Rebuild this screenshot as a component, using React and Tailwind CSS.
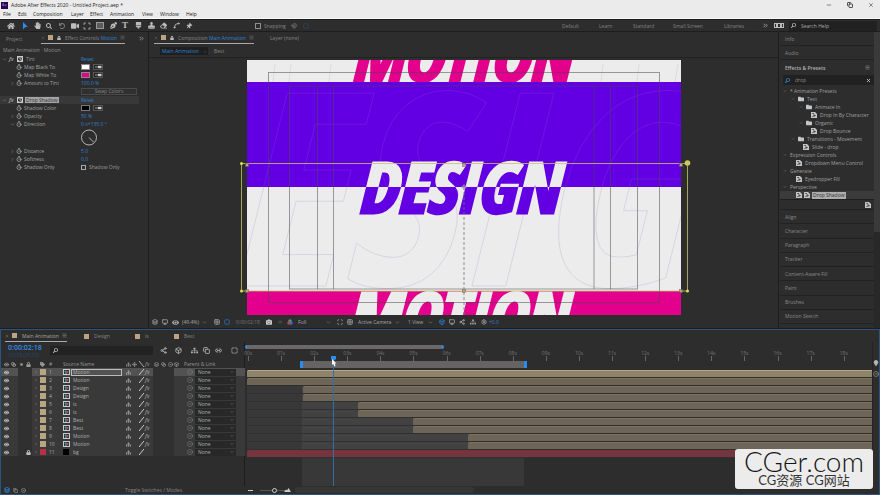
import React, { useState } from "react";
import {
  FaBrush,
  FaCamera,
  FaCube,
  FaEraser,
  FaEye,
  FaFolder,
  FaHandPaper,
  FaHome,
  FaLock,
  FaMapMarker,
  FaPenNib,
  FaSearch,
  FaSitemap,
  FaStamp,
  FaTag,
  FaThumbtack,
  FaUndo,
  FaVideo
} from "react-icons/fa";
import {
  Blend,
  Box,
  ChevronDown,
  ChevronRight,
  ChevronsRight,
  Circle,
  CircleDot,
  Copy,
  Grid2x2,
  Layers,
  Link2,
  Magnet,
  Menu,
  Minus,
  Monitor,
  Move,
  Scan,
  Settings,
  Share2,
  Spline,
  SquareDashed,
  Timer,
  X
} from "lucide-react";

const SECONDS = 18.85;

const menus = [
  ["File", "w-[15px]"],
  ["Edit", "w-[15px]"],
  ["Composition", "w-[38px]"],
  ["Layer", "w-[19px]"],
  ["Effect", "w-[20px]"],
  ["Animation", "w-[32px]"],
  ["View", "w-[18px]"],
  ["Window", "w-[26px]"],
  ["Help", "w-[14px]"]
];

const layers = [
  { name: "Motion", start: 0 },
  { name: "Motion", start: 0 },
  { name: "Design", start: 1.68 },
  { name: "Design", start: 1.68 },
  { name: "is", start: 3.34 },
  { name: "is", start: 3.34 },
  { name: "Best", start: 5 },
  { name: "Best", start: 5 },
  { name: "Motion", start: 6.66 },
  { name: "Motion", start: 6.66 },
  { name: "bg", start: 0, solid: true }
];

const presets = [
  { label: "* Animation Presets", pad: "pl-[3px]", open: true },
  { label: "Text", pad: "pl-[11px]", open: true, icon: "folder" },
  { label: "Animate In", pad: "pl-[19px]", open: true, icon: "folder" },
  { label: "Drop In By Character", pad: "pl-[31px]", icon: "preset" },
  { label: "Organic", pad: "pl-[19px]", open: true, icon: "folder" },
  { label: "Drop Bounce", pad: "pl-[31px]", icon: "preset" },
  { label: "Transitions - Movement", pad: "pl-[11px]", open: true, icon: "folder" },
  { label: "Slide - drop", pad: "pl-[23px]", icon: "preset" },
  { label: "Expression Controls", pad: "pl-[3px]", open: true },
  { label: "Dropdown Menu Control", pad: "pl-[16px]", icon: "preset" },
  { label: "Generate", pad: "pl-[3px]", open: true },
  { label: "Eyedropper Fill", pad: "pl-[16px]", icon: "preset" },
  { label: "Perspective", pad: "pl-[3px]", open: true }
];

const closedPanels = [
  "Align",
  "Character",
  "Paragraph",
  "Tracker",
  "Content-Aware Fill",
  "Paint",
  "Brushes",
  "Motion Sketch"
];

const percent = (seconds) => `${(seconds / SECONDS) * 100}%`;

function Cell({ w, children }) {
  return <span className={`flex shrink-0 items-center justify-center ${w}`}>{children}</span>;
}

function Tool({ label, w = "w-3", children }) {
  return (
    <button aria-label={label} className={`flex h-3 shrink-0 items-center justify-center ${w}`}>
      {children}
    </button>
  );
}

function PresetIcon() {
  return (
    <svg viewBox="0 0 6 6" className="size-[6px] shrink-0">
      <path d="M0 0H4L6 2V6H0Z" fill="#c4c4c4" />
      <path d="M1.3 1.5H3M1.3 4.5H2.2M3 2.2V5M3 3.6H4.8" stroke="#333" strokeWidth=".8" fill="none" />
    </svg>
  );
}

function CompIcon() {
  return (
    <svg viewBox="0 0 7 6" className="h-[6px] w-[7px]">
      <rect width="7" height="6" fill="#c9cbcb" />
      <rect x="1" y="1" width="5" height="4" fill="#26343b" />
      <circle cx="2.6" cy="2.5" r="1" fill="#50a779" />
      <rect x="3.4" y="2" width="2" height="2" fill="#c9474e" />
      <path d="M1.7 5L3 3L4.3 5Z" fill="#4b84c6" />
    </svg>
  );
}

function EyedropperIcon() {
  return (
    <svg viewBox="0 0 10 6" className="ml-[3px] h-[6px] w-[10px]">
      <rect x=".5" y=".5" width="9" height="5" fill="#252525" stroke="#686868" strokeWidth=".7" />
      <path d="M2 3H6" stroke="#bbb" strokeWidth=".8" />
      <path d="M5 1.8H8.5V4.2H5Z" fill="#d0d0d0" />
    </svg>
  );
}

function TitleBar() {
  return (
    <header className="h-[19px] border-b border-[#f8f8f8] bg-[#ebebeb] text-[#222]">
      <div className="flex h-[10px] items-center pl-px pr-1.5">
        <span className="mr-[3px] flex size-[7px] items-center justify-center bg-[#2a0650] text-[4px] text-[#b48bf0]">Ae</span>
        <span>Adobe After Effects 2020 - Untitled Project.aep *</span>
        <div className="ml-auto flex gap-[15px] text-[#222]">
          <button aria-label="Minimize"><Minus size={6} /></button>
          <button aria-label="Restore"><Copy size={6} strokeWidth={3} /></button>
          <button aria-label="Close"><X size={6} /></button>
        </div>
      </div>
      <nav className="flex h-2 items-center pl-[3px]">
        {menus.map(([label, w]) => (
          <button key={label} className={`text-left whitespace-nowrap ${w}`}>{label}</button>
        ))}
      </nav>
    </header>
  );
}

function Toolbar() {
  return (
    <div className="flex h-[13px] items-center border-t border-b border-[#1d1d1d] bg-[#2d2d2d] pl-1 text-[#bdbdbd]">
      <Tool label="Home" w="w-[14px]"><FaHome size={8} /></Tool>
      <Tool label="Selection" w="w-[13px]">
        <svg viewBox="0 0 8 8" className="size-2"><path d="M2 0L7 5H4.4L2 7.4Z" fill="#2d8ceb" /></svg>
      </Tool>
      <Tool label="Hand"><FaHandPaper size={7} /></Tool>
      <Tool label="Zoom"><FaSearch size={6} /></Tool>
      <Tool label="Rotate" w="w-[14px]"><FaUndo size={6} className="text-[#828282]" /></Tool>
      <Tool label="Camera"><FaVideo size={8} /></Tool>
      <Tool label="Pan behind"><Scan size={8} strokeWidth={3} /></Tool>
      <Tool label="Rectangle" w="w-[14px]">
        <svg viewBox="0 0 8 7" className="h-[7px] w-2"><rect x=".5" y=".5" width="7" height="6" fill="#5b5b5b" stroke="#999" /></svg>
      </Tool>
      <Tool label="Pen"><FaPenNib size={7} /></Tool>
      <Tool label="Type"><span className="font-['Liberation_Serif',serif] text-[9px] leading-[9px] font-bold">T</span></Tool>
      <Tool label="Brush" w="w-[14px]"><FaBrush size={7} /></Tool>
      <Tool label="Clone stamp"><FaStamp size={7} /></Tool>
      <Tool label="Eraser"><FaEraser size={7} /></Tool>
      <Tool label="Roto brush" w="w-[14px]"><Spline size={7} strokeWidth={3} /></Tool>
      <Tool label="Puppet pin"><FaThumbtack size={6} className="rotate-45" /></Tool>
      <label className="ml-[60px] flex items-center gap-[3px] text-[#858585]">
        <input type="checkbox" className="size-[6px] appearance-none border border-[#8f8f8f]" />
        Snapping
      </label>
      <Tool label="Snap to edges" w="ml-[2px] w-[12px]"><Magnet size={6} className="text-[#999]" /></Tool>
      <Tool label="Snap inside"><SquareDashed size={6} className="text-[#286092]" /></Tool>
      <div className="ml-auto flex items-center whitespace-nowrap text-[#828282]">
        <button className="w-[37px] text-left">Default</button>
        <button className="w-[34px] text-left">Learn</button>
        <button className="w-[40px] text-left">Standard</button>
        <button className="w-[51px] text-left">Small Screen</button>
        <button className="w-[37px] text-left">Libraries</button>
        <Tool label="More workspaces" w="w-[8px]"><ChevronsRight size={7} className="text-[#ccc]" /></Tool>
        <Tool label="Workspace grid" w="w-[20px]">
          <svg viewBox="0 0 10 5" className="h-[5px] w-[10px]"><path d="M0 0H10V5H0ZM1 1V4H2V1ZM4 1V4H6V1ZM8 1V4H9V1Z" fill="#bbb" fillRule="evenodd" /></svg>
        </Tool>
      </div>
      <label className="mr-[3px] flex h-[10px] w-[88px] items-center bg-[#212121] pl-0.5 text-[#b5b5b5]">
        <FaSearch size={5} className="mr-[5px] shrink-0 -scale-x-100" />
        <input aria-label="Search Help" placeholder="Search Help" className="w-full min-w-0 placeholder:text-[#a9a9a9]" />
      </label>
    </div>
  );
}

function PropertyRow({ label, arrow, children }) {
  return (
    <div className="flex h-2 items-center text-[#a3a3a3]">
      <span className="flex w-[16px] justify-end pr-px">
        {arrow === "right" && <ChevronRight size={5} />}
        {arrow === "down" && <ChevronDown size={5} />}
      </span>
      <Timer size={6} strokeWidth={3} className="mr-[2px]" />
      <span className="w-[57px] whitespace-nowrap">{label}</span>
      <span className="flex items-center whitespace-nowrap text-[#2f82d0]">{children}</span>
    </div>
  );
}

function EffectHeading({ label, selected }) {
  return (
    <div className={`flex h-2 items-center ${selected ? "mr-[9px] bg-[#383838]" : ""}`}>
      <span className="flex w-[9px] justify-center text-[#999]"><ChevronDown size={5} /></span>
      <i className="w-2 text-[6px] text-[#c8c8c8]">fx</i>
      <span className="mr-[2px] flex h-[6px] w-[6px] items-center justify-center bg-[#c8c8c8] text-[#333]"><FaCube size={4} /></span>
      <span className="w-[56px]">
        <span className={selected ? "bg-[#a3a3a3] px-px text-[#333]" : "px-px text-[#999]"}>{label}</span>
      </span>
      <button className="text-[#2f82d0]">Reset</button>
    </div>
  );
}

function EffectControls() {
  return (
    <section className="flex w-[148px] shrink-0 flex-col bg-[#2d2d2d]">
      <div className="flex h-[12px] items-center pl-[6px] text-[#858585]">
        <button className="w-[35px] pt-px text-left">Project</button>
        <div className="flex h-full w-[84px] items-center border-b border-[#aaa] whitespace-nowrap">
          <X size={4} className="mr-[3px]" />
          <span className="size-[5px] bg-[#b9a583]" />
          <FaLock size={4} className="mx-1 text-[#bbb]" />
          <button>Effect Controls <span className="text-[#2f82d0]">Motion</span></button>
          <Menu size={5} className="ml-[3px]" />
        </div>
        <ChevronsRight size={7} className="mr-[3px] ml-auto text-[#bbb]" />
      </div>
      <div className="h-[11px] pt-[2px] pl-[3px] text-[#8f8f8f]">Main Animation · Motion</div>
      <EffectHeading label="Tint" />
      <PropertyRow label="Map Black To">
        <button aria-label="Black colour" className="h-[6px] w-[9px] border border-[#888] bg-white" /><EyedropperIcon />
      </PropertyRow>
      <PropertyRow label="Map White To">
        <button aria-label="White colour" className="h-[6px] w-[9px] border border-[#888] bg-[#e3008c]" /><EyedropperIcon />
      </PropertyRow>
      <PropertyRow label="Amount to Tint" arrow="right">100.0 %</PropertyRow>
      <button className="mt-px ml-[81px] h-[7px] w-[56px] border border-[#191919] bg-[#303030] leading-[5px] text-[#858585] outline outline-[#494949] -outline-offset-1">Swap Colors</button>
      <div className="h-px" />
      <EffectHeading label="Drop Shadow" selected />
      <PropertyRow label="Shadow Color">
        <button aria-label="Shadow colour" className="h-[6px] w-[9px] border border-[#777] bg-black" /><EyedropperIcon />
      </PropertyRow>
      <PropertyRow label="Opacity" arrow="right">50 %</PropertyRow>
      <PropertyRow label="Direction" arrow="down">0 x+135.0 °</PropertyRow>
      <svg viewBox="0 0 18 19" className="ml-[80px] h-[19px] w-[18px]">
        <circle cx="9" cy="9.5" r="7.5" fill="none" stroke="#b4b4b4" />
        <path d="M9 9.5L13.5 14" stroke="#b4b4b4" />
      </svg>
      <PropertyRow label="Distance" arrow="right">5.0</PropertyRow>
      <PropertyRow label="Softness" arrow="right">0.0</PropertyRow>
      <PropertyRow label="Shadow Only">
        <label className="flex items-center gap-[3px] text-[#9b9b9b]">
          <input type="checkbox" className="size-[5px] appearance-none border border-[#aaa]" />
          Shadow Only
        </label>
      </PropertyRow>
    </section>
  );
}

function Artwork() {
  const heavy = "font-['Open_Sans_Condensed','Roboto_Condensed','Liberation_Sans_Narrow',sans-serif] font-bold italic";
  return (
    <svg viewBox="149 58 629 258" className="block w-full border-t border-[#222]">
      <defs>
        <clipPath id="top"><rect x="247" y="60" width="434" height="22" /></clipPath>
        <clipPath id="middle"><rect x="247" y="82" width="434" height="209" /></clipPath>
        <clipPath id="bottom"><rect x="247" y="291" width="434" height="24" /></clipPath>
        <linearGradient id="split" gradientUnits="userSpaceOnUse" x1="0" y1="82" x2="0" y2="292">
          <stop offset=".5" stopColor="#ececec" />
          <stop offset=".5" stopColor="#6200e3" />
        </linearGradient>
        <linearGradient id="outline" gradientUnits="userSpaceOnUse" x1="0" y1="82" x2="0" y2="292">
          <stop offset=".5" stopColor="#6d16e2" />
          <stop offset=".5" stopColor="#d6d5df" />
        </linearGradient>
      </defs>
      <rect x="247" y="60" width="434" height="255" fill="#ececec" />
      <rect x="247" y="82" width="434" height="105" fill="#6200e3" />
      <rect x="247" y="291" width="434" height="24" fill="#e3008c" />
      <path d="M275 64L273 82M291 64L289 82M331 64L329 82M603 64L601 82M639 64L637 82M678 64L675 82" stroke="#dcdcdf" />
      <g clipPath="url(#middle)">
        <text x="222" y="286" fontSize="270" className={heavy} fill="none" stroke="url(#outline)">ESIGN</text>
      </g>
      <g clipPath="url(#top)">
        <text x="460" y="81" fontSize="66" textAnchor="middle" className={heavy} fill="#e3008c" stroke="#e3008c" strokeWidth="3">MOTION</text>
      </g>
      <g clipPath="url(#bottom)">
        <text x="456" y="340" fontSize="66" textAnchor="middle" className={heavy} fill="#ececec" stroke="#ececec" strokeWidth="3">MOTION</text>
      </g>
      <text x="457" y="213" fontSize="70" textAnchor="middle" className={heavy} fill="url(#split)" stroke="url(#split)" strokeWidth="3">DESIGN</text>
      <g fill="none" stroke="#4a4a4a" strokeOpacity=".65" strokeWidth=".8">
        <rect x="268.5" y="72.5" width="391" height="230" />
        <rect x="289.5" y="86" width="348" height="203" />
        <path d="M317.5 86V289M333.5 86V289M594 86V289M610.5 86V289" />
      </g>
      <rect x="241.5" y="163.5" width="446" height="127.5" fill="none" stroke="#c5c466" strokeWidth=".8" />
      <path d="M464 187V315" stroke="#777" strokeWidth=".8" strokeDasharray="3 2" />
      <g fill="#b7a47c" stroke="#5e5545" strokeWidth=".4">
        <rect x="245.5" y="163.5" width="3" height="3" />
        <rect x="462.5" y="163.5" width="3" height="3" />
        <rect x="679.5" y="163.5" width="3" height="3" />
        <rect x="245.5" y="289.5" width="3" height="3" />
        <rect x="462.5" y="289.5" width="3" height="3" />
        <rect x="679.5" y="289.5" width="3" height="3" />
      </g>
      <g fill="#e0e04e">
        <circle cx="241.5" cy="163.5" r="1.5" />
        <circle cx="241.5" cy="291" r="1.5" />
        <circle cx="687.5" cy="291" r="1.5" />
        <circle cx="687.5" cy="163" r="2.8" fill="#c9c95c" />
      </g>
      <path d="M461 187H467M464 184V190" stroke="#a99" strokeWidth=".7" />
      <circle cx="464" cy="187" r="1.5" fill="none" stroke="#a99" strokeWidth=".7" />
    </svg>
  );
}

function Dropdown({ label, value, w }) {
  return (
    <span className={`flex shrink-0 items-center ${w}`}>
      <select aria-label={label} className="min-w-0 flex-1 appearance-none">
        <option>{value}</option>
      </select>
      <ChevronDown size={5} className="mr-1 shrink-0" />
    </span>
  );
}

function Viewer() {
  return (
    <section className="ml-px flex min-w-0 flex-1 flex-col bg-[#2d2d2d] text-[#858585]">
      <div className="flex h-[12px] items-center pl-[5px]">
        <div className="flex h-full w-[100px] items-center border-b border-[#aaa] whitespace-nowrap">
          <X size={4} className="mr-[3px]" />
          <span className="size-[5px] bg-[#b9a583]" />
          <FaLock size={4} className="mx-1 text-[#bbb]" />
          <button>Composition <span className="text-[#2f82d0]">Main Animation</span></button>
          <Menu size={5} className="ml-[3px]" />
        </div>
        <button className="ml-[16px]">Layer (none)</button>
      </div>
      <div className="flex h-[13px] items-center pl-[11px]">
        <button className="flex h-[8px] w-[48px] items-center justify-between bg-[#1f1f1f] px-0.5 whitespace-nowrap text-[#2f82d0]">
          Main Animation <span>‹</span>
        </button>
        <button className="ml-[6px]">Best</button>
      </div>
      <Artwork />
      <div className="flex h-[12px] items-center whitespace-nowrap text-[#a6a6a6]">
        <Cell w="w-[11px]"><Layers size={6} strokeWidth={3} /></Cell>
        <Cell w="w-[9px]"><Monitor size={6} strokeWidth={3} /></Cell>
        <Cell w="w-[13px]"><FaEye size={7} /></Cell>
        <Dropdown label="Magnification" value="(49.4%)" w="w-[29px]" />
        <Cell w="w-[11px]"><Grid2x2 size={6} strokeWidth={3} /></Cell>
        <Cell w="w-[10px]"><SquareDashed size={6} strokeWidth={3} className="text-[#2f82d0]" /></Cell>
        <span className="ml-[4px] w-[27px] text-[#777]">0:00:02:18</span>
        <Cell w="w-[12px]"><FaCamera size={6} className="text-[#ccc]" /></Cell>
        <Cell w="w-[9px]"><FaEye size={4} className="text-[#555]" /></Cell>
        <Cell w="w-[12px]">
          <svg viewBox="0 0 6 6" className="size-[6px]">
            <circle cx="3" cy="2" r="1.8" fill="#42a84a" />
            <circle cx="2" cy="4" r="1.8" fill="#cf3d43" />
            <circle cx="4" cy="4" r="1.8" fill="#4962d2" />
          </svg>
        </Cell>
        <Dropdown label="Resolution" value="Full" w="ml-[2px] w-[37px]" />
        <Cell w="w-[10px]"><Scan size={6} strokeWidth={3} /></Cell>
        <Cell w="w-[10px]"><Grid2x2 size={6} strokeWidth={3} /></Cell>
        <Dropdown label="Camera" value="Active Camera" w="ml-[3px] w-[46px]" />
        <Dropdown label="View layout" value="1 View" w="ml-[4px] w-[29px]" />
        <Cell w="w-[10px]"><Box size={6} strokeWidth={3} className="text-[#2f82d0]" /></Cell>
        <Cell w="w-[10px]"><Monitor size={6} strokeWidth={3} /></Cell>
        <Cell w="w-[10px]"><Share2 size={6} strokeWidth={3} /></Cell>
        <Cell w="w-[11px]"><FaSitemap size={6} /></Cell>
        <Cell w="w-[11px]"><Settings size={6} strokeWidth={3} /></Cell>
        <span className="text-[#2f82d0]">+0.0</span>
      </div>
    </section>
  );
}

function EffectsPanel() {
  const [query, setQuery] = useState("drop");
  return (
    <section className="ml-px flex w-[101px] shrink-0 bg-[#2d2d2d] text-[#8a8a8a]">
      <div className="flex min-w-0 flex-1 flex-col pl-px whitespace-nowrap">
        <button className="flex h-[14px] items-center border-b border-[#222] pl-[5px]">Info</button>
        <button className="flex h-[14px] items-center border-b border-[#222] pl-[5px]">Audio</button>
        <div className="flex h-[15px] items-center justify-between pr-1 pl-[5px] text-[#b2b2b2]">
          <h2 className="font-semibold">Effects & Presets</h2>
          <Menu size={5} />
        </div>
        <label className="ml-[3px] flex h-[10px] items-center bg-[#212121] pr-[3px] pl-0.5">
          <FaSearch size={5} className="mr-[5px] shrink-0 -scale-x-100 text-[#2f82d0]" />
          <input aria-label="Search effects" value={query} onChange={(e) => setQuery(e.target.value)} className="min-w-0 flex-1" />
          <button aria-label="Clear search" onClick={() => setQuery("")}><X size={5} strokeWidth={4} className="text-[#ccc]" /></button>
        </label>
        <ul className="pt-[2px] text-[#a0a0a0]">
          {presets.map((item) => (
            <li key={item.label} className={`flex h-2 items-center gap-[3px] ${item.pad}`}>
              {item.open && <ChevronDown size={4} className="shrink-0" />}
              {item.icon === "folder" && <FaFolder size={6} className="shrink-0 text-[#c4c4c4]" />}
              {item.icon === "preset" && <PresetIcon />}
              <span>{item.label}</span>
            </li>
          ))}
          <li className="flex h-2 items-center gap-[2px] bg-[#3b3b3b] pl-[16px]">
            <PresetIcon />
            <PresetIcon />
            <span className="bg-[#adadad] px-px leading-[7px] text-[#333]">Drop Shadow</span>
          </li>
        </ul>
        <div className="flex h-[10px] items-center justify-end border-t border-[#1f1f1f] pr-[3px]"><PresetIcon /></div>
        <div className="flex flex-1 flex-col border-b border-[#222]">
          {closedPanels.map((name) => (
            <button key={name} className="flex flex-1 items-center border-t border-[#222] pl-[5px]">{name}</button>
          ))}
        </div>
        <div className="h-[4px]" />
      </div>
      <div className="w-[6px] bg-[#282828]"><div className="h-[200px] bg-[#3a3a3a]" /></div>
    </section>
  );
}

function LayerRow({ layer, index }) {
  const selected = index === 0;
  return (
    <tr className={`h-2 ${selected ? "bg-[#525252]" : "bg-[#393939]"}`}>
      <td><FaEye size={5} className="mx-auto text-[#ccc]" /></td>
      <td />
      <td className="bg-[#303030]" />
      <td className="bg-[#303030]">{layer.solid && <FaLock size={5} className="mx-auto text-[#bbb]" />}</td>
      <td><ChevronRight size={4} className="mx-auto" /></td>
      <td><span className={`block size-[6px] ${layer.solid ? "bg-[#b92f48]" : "bg-[#b9a583]"}`} /></td>
      <td>{index + 1}</td>
      <td>{layer.solid ? <span className="block size-[6px] bg-black" /> : <CompIcon />}</td>
      <td>
        <span className={`block h-[7px] w-[51px] pl-[2px] ${selected ? "outline outline-[#bbb] -outline-offset-1" : ""}`}>{layer.name}</span>
      </td>
      <td><FaSitemap size={5} className="mx-auto" /></td>
      <td />
      <td>
        <svg viewBox="0 0 5 6" className="mx-auto h-[6px] w-[5px]"><path d="M0 6L5 0" stroke="#ccc" /></svg>
      </td>
      <td className="text-[6px] italic">{!layer.solid && "fx"}</td>
      <td className="bg-[#303030]" />
      <td className="bg-[#303030]" />
      <td className="bg-[#303030]" />
      <td />
      <td><CircleDot size={6} className="mx-auto text-[#858585]" /></td>
      <td>
        <span className="flex h-[7px] items-center bg-[#282828] pr-0.5 pl-[3px]">
          <select aria-label={`Parent of layer ${index + 1}`} className="h-[7px] min-w-0 flex-1 appearance-none leading-[7px]">
            <option>None</option>
          </select>
          <ChevronDown size={4} />
        </span>
      </td>
      <td />
    </tr>
  );
}

function LayerTable() {
  const widths = [10, 7, 7, 7, 8, 9, 14, 8, 54, 7, 6, 7, 8, 7, 7, 7, 10, 11, 41, 9];
  return (
    <table className="w-full table-fixed border-collapse text-[#adadad]">
      <colgroup>
        {widths.map((w, i) => <col key={i} style={{ width: w }} />)}
      </colgroup>
      <thead>
        <tr className="h-2 text-left text-[#969696] [&>th]:p-0 [&>th]:font-normal">
          <th aria-label="Visible"><FaEye size={5} className="mx-auto" /></th>
          <th aria-label="Audio"><Blend size={5} strokeWidth={4} /></th>
          <th aria-label="Solo"><Circle size={3} fill="currentColor" className="mx-auto" /></th>
          <th aria-label="Lock"><FaLock size={5} className="mx-auto" /></th>
          <th />
          <th aria-label="Label"><FaTag size={5} /></th>
          <th>#</th>
          <th colSpan={2} className="whitespace-nowrap">Source Name</th>
          <th aria-label="Shy"><FaSitemap size={5} className="mx-auto" /></th>
          <th aria-label="Collapse"><Move size={5} strokeWidth={3} /></th>
          <th aria-label="Quality">
            <svg viewBox="0 0 5 6" className="mx-auto h-[6px] w-[5px]"><path d="M0 0L5 6" stroke="#aaa" /></svg>
          </th>
          <th className="text-[6px] italic">fx</th>
          <th aria-label="Frame blending"><Layers size={5} strokeWidth={3} className="mx-auto" /></th>
          <th aria-label="Motion blur"><Blend size={5} strokeWidth={3} className="mx-auto" /></th>
          <th aria-label="Adjustment"><CircleDot size={5} strokeWidth={3} className="mx-auto" /></th>
          <th aria-label="3D"><Box size={5} strokeWidth={3} /></th>
          <th colSpan={3} className="whitespace-nowrap">Parent & Link</th>
        </tr>
      </thead>
      <tbody className="leading-[7px] [&_td]:p-0">
        {layers.map((layer, i) => <LayerRow key={i} layer={layer} index={i} />)}
      </tbody>
    </table>
  );
}

function Tracks() {
  const ticks = Array.from({ length: 19 }, (_, i) => `${String(i).padStart(2, "0")}s`);
  return (
    <div className="flex min-w-0 flex-1 flex-col">
      <div className="mt-[3px] h-[4px] w-[199px] rounded-sm border-x-2 border-[#2d8ceb] bg-[#6a6868]" />
      <div className="flex h-[12px] pl-[3px]">
        {ticks.map((label) => (
          <div key={label} className="shrink-0 text-[#777]" style={{ width: percent(1) }}>
            <span className="-ml-[4px] block h-[7px] leading-[8px]">{label}</span>
            <span className="block h-[5px] border-l border-[#666]" />
          </div>
        ))}
      </div>
      <div className="flex h-[9px] pl-[2px]">
        <div
          className="h-[7px] border-x-3 border-[#2d8ceb] bg-[#656363]"
          style={{ marginLeft: percent(1.6), width: percent(6.84) }}
        />
      </div>
      <div className="relative ml-[2px] flex-1">
        <div
          className="absolute inset-y-0 bg-[#383838]"
          style={{ left: percent(1.67), width: percent(6.68) }}
        />
        {layers.map((layer, i) => (
          <div key={i} className="relative h-2 border-b border-[#303030] bg-white/5">
            <div
              className={`h-[7px] rounded-tl-[2px] ${
                layer.solid
                  ? "bg-[#75353f]"
                  : i === 0
                    ? "border-t border-[#b3a88b] bg-[#8f8469]"
                    : "border-t border-[#7c725f] bg-[#6e6556]"
              }`}
              style={{ marginLeft: percent(layer.start) }}
            />
          </div>
        ))}
        <div className="absolute -top-[14px] bottom-0 w-px bg-[#2f6fa8]" style={{ left: percent(2.6) }}>
          <svg viewBox="0 0 8 12" className="-ml-[3px] h-3 w-2 max-w-none">
            <path d="M1 0H6V3L3.500 5L1 3Z" fill="#2d8ceb" />
            <path d="M2 3L6.500 7.500H4.700L5.500 10L4.300 10.400L3.400 8L2 9Z" fill="#fff" />
          </svg>
        </div>
      </div>
    </div>
  );
}

function CompTab({ label, w }) {
  return (
    <button className={`flex items-center gap-[5px] text-[#858585] ${w}`}>
      <span className="size-[5px] bg-[#b9a583]" />
      {label}
    </button>
  );
}

function Timeline() {
  return (
    <section className="mt-px flex h-[166px] flex-col border border-[#2b5480] bg-[#2d2d2d]">
      <div className="flex h-[12px] items-center pl-[4px]">
        <div className="mr-[17px] flex h-full w-[62px] items-center border-b border-[#aaa] whitespace-nowrap text-[#a5a5a5]">
          <X size={4} className="mr-[3px]" />
          <span className="mr-[5px] size-[5px] bg-[#b9a583]" />
          <button>Main Animation</button>
          <Menu size={5} className="ml-auto" />
        </div>
        <CompTab label="Design" w="w-[51px]" />
        <CompTab label="is" w="w-[39px]" />
        <CompTab label="Best" w="w-[30px]" />
      </div>
      <div className="flex min-h-0 flex-1">
        <div className="flex w-[244px] shrink-0 flex-col border-r border-[#1d1d1d]">
          <div className="flex h-[18px] items-start pl-[7px]">
            <div className="w-[42px] pt-px">
              <div className="text-[7px] leading-[9px] font-semibold text-[#2d8ceb]">0:00:02:18</div>
              <div className="leading-[7px] whitespace-nowrap text-[#24496e]">00078 (30.00)</div>
            </div>
            <label className="mt-[4px] mr-[5px] flex h-[9px] w-[103px] items-center bg-[#222] pl-[3px]">
              <FaSearch size={5} className="shrink-0 -scale-x-100 text-[#bbb]" />
              <input aria-label="Search layers" className="min-w-0 flex-1" />
            </label>
            <div className="mt-[5px] flex text-[#b0b0b0]">
              <Cell w="w-[11px]"><Share2 size={7} strokeWidth={3} /></Cell>
              <Cell w="w-[19px]"><Box size={7} strokeWidth={3} /></Cell>
              <Cell w="w-[13px]"><FaSitemap size={7} /></Cell>
              <Cell w="w-[11px]"><Copy size={7} strokeWidth={3} /></Cell>
              <Cell w="w-[13px]"><Link2 size={7} strokeWidth={3} /></Cell>
              <Cell w="w-[18px]"><SquareDashed size={7} strokeWidth={3} /></Cell>
            </div>
          </div>
          <LayerTable />
        </div>
        <Tracks />
        <div className="flex w-[7px] flex-col items-center gap-[5px] border-l border-[#222] pt-[18px] text-[#b5b5b5]">
          <FaMapMarker size={6} />
          <CircleDot size={6} />
        </div>
      </div>
      <div className="flex h-[8px] items-center pl-[2px] text-[#999]">
        <Cell w="w-[8px]"><Layers size={6} strokeWidth={3} className="text-[#2d8ceb]" /></Cell>
        <Cell w="w-[8px]"><Copy size={5} strokeWidth={3} /></Cell>
        <Cell w="w-[8px]"><CircleDot size={5} strokeWidth={3} /></Cell>
        <button className="ml-[98px] w-[120px] text-left text-[#858585]">Toggle Switches / Modes</button>
        <span className="mx-[3px] h-px w-[5px] bg-[#ccc]" />
        <input
          type="range"
          aria-label="Timeline zoom"
          defaultValue={50}
          className="ml-[4px] h-[5px] w-[28px] appearance-none bg-[linear-gradient(#555,#555)] bg-[length:100%_1px] bg-center bg-no-repeat [&::-webkit-slider-thumb]:size-[5px] [&::-webkit-slider-thumb]:appearance-none [&::-webkit-slider-thumb]:rounded-full [&::-webkit-slider-thumb]:border [&::-webkit-slider-thumb]:border-[#ccc] [&::-webkit-slider-thumb]:bg-[#2d2d2d]"
        />
        <svg viewBox="0 0 7 4" className="-ml-[4px] h-[4px] w-[7px]"><path d="M0 4L2 1.500L3 2.500L4.500 0L7 4Z" fill="#ccc" /></svg>
        <div className="ml-1 h-[6px] w-[179px] rounded bg-[#363636]" />
      </div>
    </section>
  );
}

function Watermark() {
  return (
    <div className="absolute right-[7px] bottom-[6px] flex h-[40px] w-[138px] flex-col items-center rounded-[3px] bg-[#ececec] font-['Lato','Noto_Sans_CJK_SC',sans-serif] whitespace-nowrap text-[#151515]">
      <span className="font-['Lato_Light','Lato',sans-serif] text-[28px] leading-[24px] font-light">CGer.com</span>
      <span className="text-[13px] leading-[14px] text-[#333]">CG资源 CG网站</span>
    </div>
  );
}

function App() {
  return (
    <div className="relative flex min-h-screen flex-col overflow-hidden bg-[#1d1d1d] font-['Open_Sans','Noto_Sans',sans-serif] text-[5px] leading-[8px] text-[#999]">
      <TitleBar />
      <Toolbar />
      <main className="flex flex-1">
        <EffectControls />
        <Viewer />
        <EffectsPanel />
      </main>
      <Timeline />
      <Watermark />
    </div>
  );
}

export default App;
